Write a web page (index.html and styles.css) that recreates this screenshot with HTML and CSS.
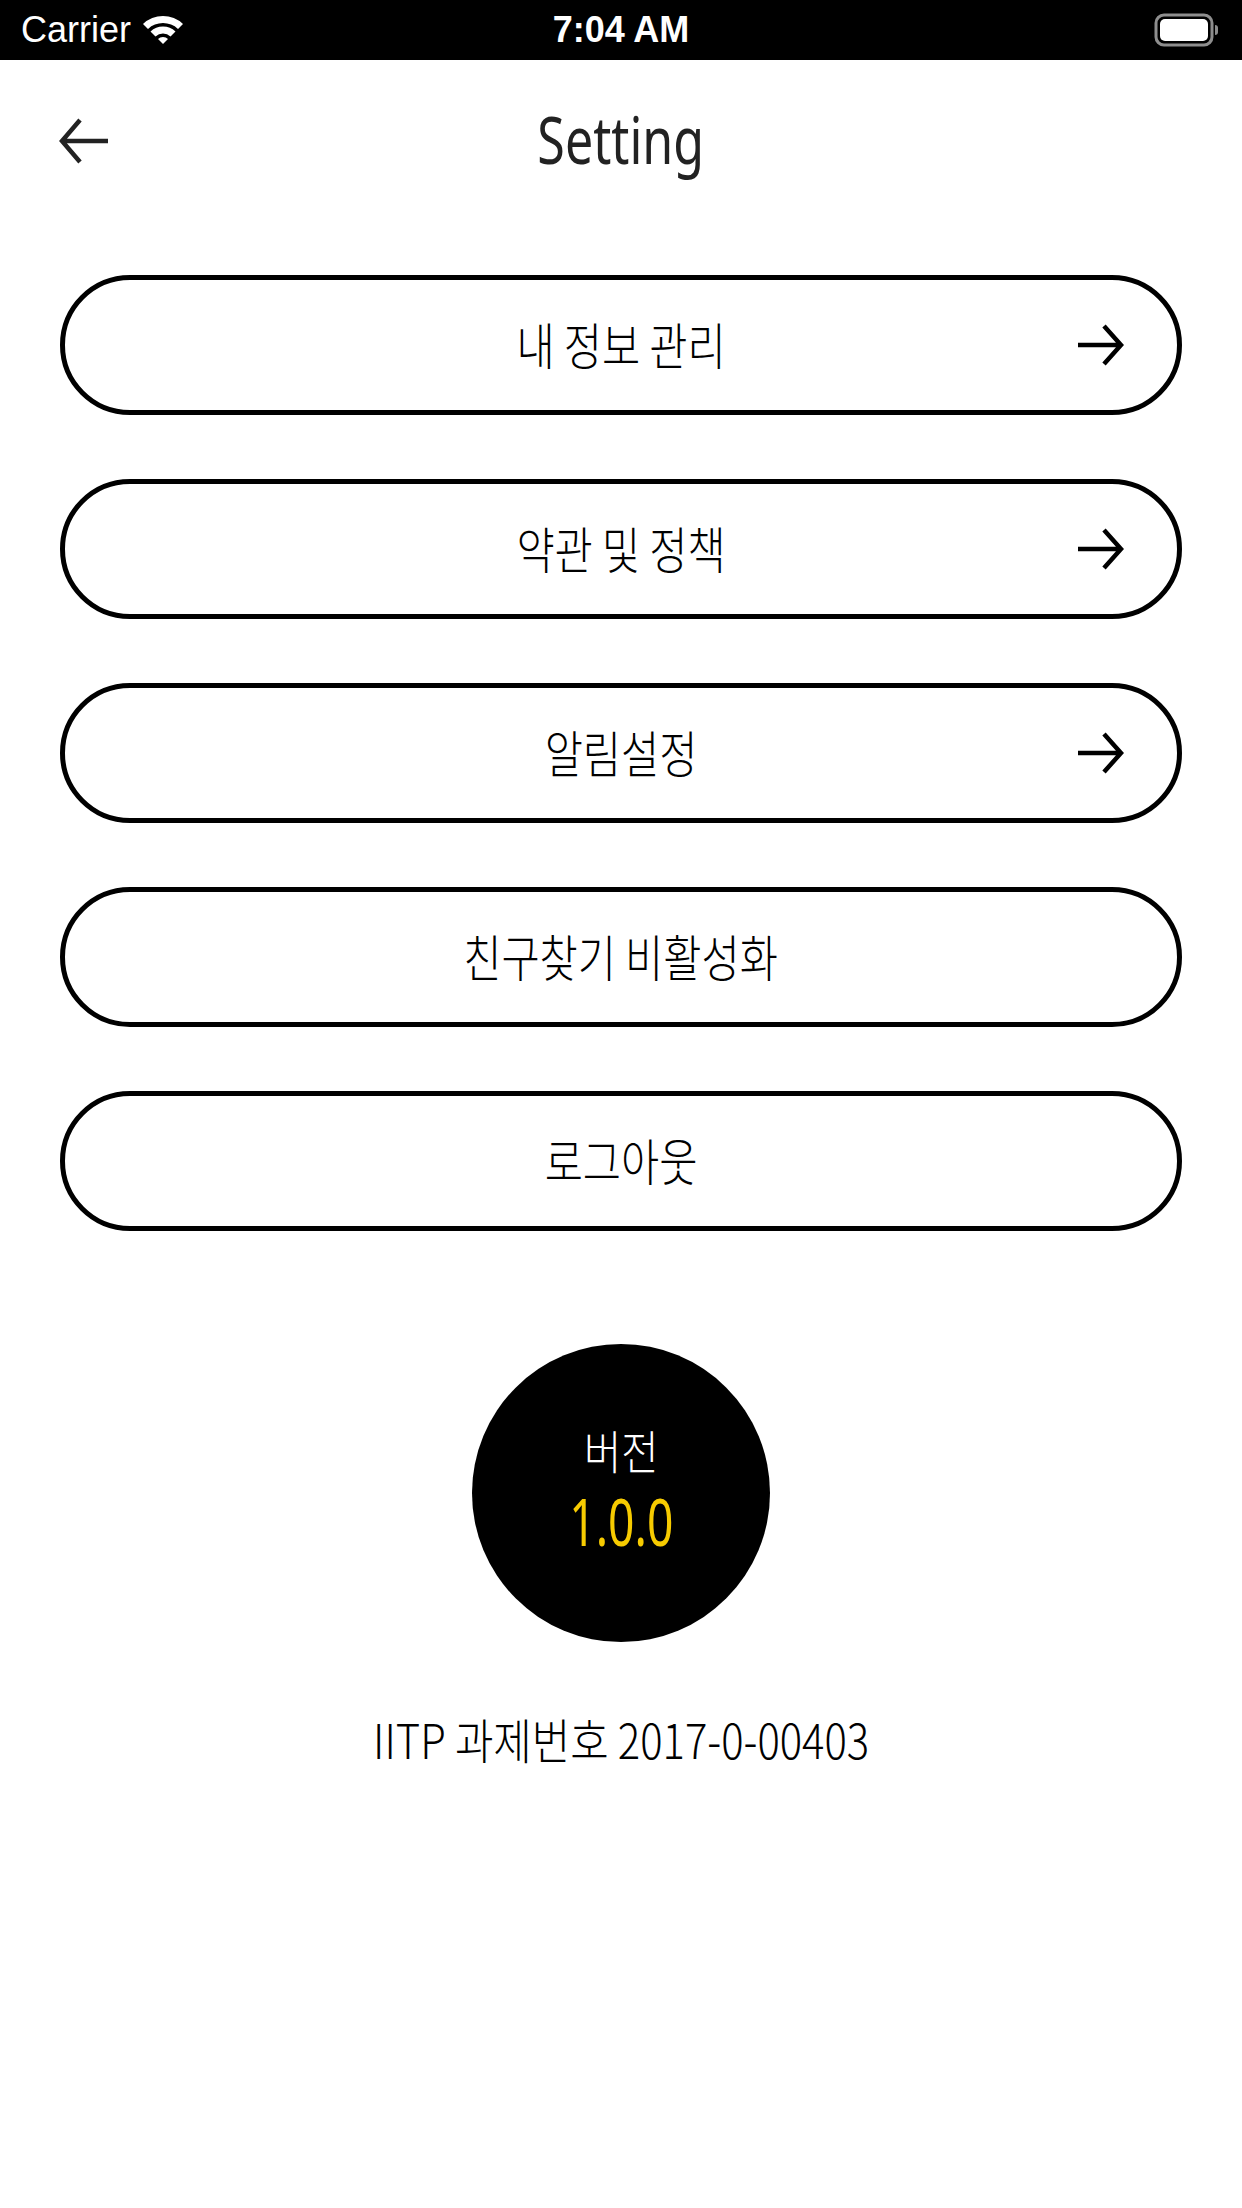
FILE: index.html
```html
<!DOCTYPE html>
<html>
<head>
  <meta charset="utf-8">
  <meta name="viewport" content="width=device-width">
  <title>Setting</title>
  <link rel="stylesheet" href="styles.css">
</head>
<body>
  <div class="status-bar">
    <div class="status-left">
      <span class="carrier">Carrier</span>
      <svg class="wifi" width="44" height="34" viewBox="0 0 44 34">
        <path d="M2 12 A29 29 0 0 1 42 12 L37 17 A22 22 0 0 0 7 17 Z" fill="#fff"/>
        <path d="M9.5 19.5 A18 18 0 0 1 34.5 19.5 L29.5 24.5 A11 11 0 0 0 14.5 24.5 Z" fill="#fff"/>
        <path d="M17 27 A7 7 0 0 1 27 27 L22 32 Z" fill="#fff"/>
      </svg>
    </div>
    <div class="status-time">7:04 AM</div>
    <div class="status-right">
      <svg width="66" height="34" viewBox="0 0 66 34">
        <rect x="2" y="2" width="56" height="30" rx="8" fill="none" stroke="#8e8e8e" stroke-width="3"/>
        <rect x="6" y="6" width="48" height="22" rx="5" fill="#fff"/>
        <path d="M61 12 Q64 12 64 15 L64 19 Q64 22 61 22 Z" fill="#8e8e8e"/>
      </svg>
    </div>
  </div>

  <div class="nav">
    <div class="nav-back">
      <svg width="52" height="48" viewBox="0 0 52 48">
        <path d="M50 24 H5 M22 3 L4 24 L22 45" fill="none" stroke="#222" stroke-width="4.5" stroke-linejoin="miter"/>
      </svg>
    </div>
    <h1 class="nav-title"><span class="narrow">Setting</span></h1>
    <div></div>
  </div>

  <div class="menu">
    <div class="menu-btn">
      <div></div>
      <span class="menu-label narrow">내 정보 관리</span>
      <svg class="go" width="48" height="44" viewBox="0 0 48 44">
        <path d="M2 22 H44 M28 3 L45 22 L28 41" fill="none" stroke="#000" stroke-width="4.5"/>
      </svg>
    </div>
    <div class="menu-btn">
      <div></div>
      <span class="menu-label narrow">약관 및 정책</span>
      <svg class="go" width="48" height="44" viewBox="0 0 48 44">
        <path d="M2 22 H44 M28 3 L45 22 L28 41" fill="none" stroke="#000" stroke-width="4.5"/>
      </svg>
    </div>
    <div class="menu-btn">
      <div></div>
      <span class="menu-label narrow">알림설정</span>
      <svg class="go" width="48" height="44" viewBox="0 0 48 44">
        <path d="M2 22 H44 M28 3 L45 22 L28 41" fill="none" stroke="#000" stroke-width="4.5"/>
      </svg>
    </div>
    <div class="menu-btn">
      <div></div>
      <span class="menu-label narrow">친구찾기 비활성화</span>
      <div></div>
    </div>
    <div class="menu-btn">
      <div></div>
      <span class="menu-label narrow">로그아웃</span>
      <div></div>
    </div>
  </div>

  <div class="version">
    <span class="version-title narrow">버전</span>
    <span class="version-num narrow">1.0.0</span>
  </div>

  <p class="project"><span class="narrow">IITP 과제번호 2017-0-00403</span></p>
</body>
</html>
```

FILE: styles.css
```css
html, body {
  margin: 0;
  padding: 0;
  background: #fff;
}
body {
  width: 1242px;
  height: 2208px;
  font-family: "Noto Sans", "Noto Sans CJK KR", sans-serif;
  color: #000;
  display: flex;
  flex-direction: column;
  align-items: center;
}

.narrow {
  display: inline-block;
  transform: scaleX(.76);
  white-space: nowrap;
}

/* status bar */
.status-bar {
  width: 100%;
  height: 60px;
  background: #000;
  color: #fff;
  display: grid;
  grid-template-columns: 1fr auto 1fr;
  align-items: center;
  font-family: "Liberation Sans", Arial, sans-serif;
}
.status-left {
  display: flex;
  align-items: center;
  gap: 10px;
  padding-left: 21px;
}
.carrier { font-size: 36px; }
.wifi { margin-top: -2px; }
.status-time {
  font-size: 36px;
  font-weight: bold;
}
.status-right {
  display: flex;
  justify-content: flex-end;
  padding-right: 22px;
}

/* nav */
.nav {
  width: 100%;
  height: 162px;
  display: grid;
  grid-template-columns: 1fr auto 1fr;
  align-items: center;
}
.nav-back {
  padding-left: 58px;
  display: flex;
  align-items: center;
}
.nav-title {
  margin: 0;
  font-size: 66px;
  font-weight: 400;
  color: #222;
  line-height: 1;
  margin-top: -6px;
}

/* menu */
.menu {
  width: 1122px;
  margin-top: 53px;
  display: flex;
  flex-direction: column;
  gap: 64px;
}
.menu-btn {
  box-sizing: border-box;
  height: 140px;
  border: 5.5px solid #000;
  border-radius: 70px;
  display: grid;
  grid-template-columns: 1fr auto 1fr;
  align-items: center;
  padding: 0 53px;
}
.menu-label {
  font-family: "Noto Sans CJK KR", sans-serif;
  font-weight: 300;
  font-size: 50px;
  line-height: 1;
  margin-top: -4px;
  transform: scaleX(.83);
}
.go {
  justify-self: end;
}

/* version badge */
.version {
  margin-top: 113px;
  width: 298px;
  height: 298px;
  border-radius: 50%;
  background: #000;
  display: flex;
  flex-direction: column;
  align-items: center;
  justify-content: center;
  gap: 11px;
  padding-bottom: 4px;
  box-sizing: border-box;
}
.version-title {
  font-family: "Liberation Sans", "Noto Sans CJK KR", sans-serif;
  font-weight: 300;
  color: #fff;
  font-size: 46px;
  line-height: 1;
  transform: scaleX(.88);
}
.version-num {
  color: #f7cb00;
  font-size: 66px;
  line-height: 1;
  transform: scaleX(.7);
}

.project {
  margin: 66px 0 0;
  font-family: "Noto Sans CJK KR", sans-serif;
  font-weight: 300;
  font-size: 48px;
  line-height: 60px;
}
.project .narrow { transform: scaleX(.87); }
```
